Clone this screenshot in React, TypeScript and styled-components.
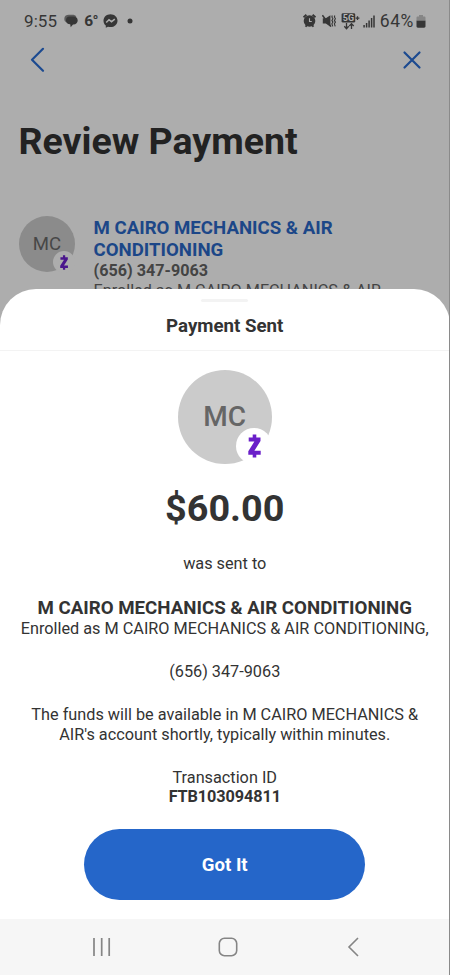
import React, { FC } from "react";
import styled, { createGlobalStyle } from "styled-components";

const GlobalStyle = createGlobalStyle`
  * {
    box-sizing: border-box;
  }
  body {
    margin: 0;
    font-family: Roboto, "Liberation Sans", sans-serif;
  }
`;

const Screen = styled.div`
  position: relative;
  display: flex;
  flex-direction: column;
  width: 450px;
  height: 975px;
  overflow: hidden;
  background-color: #adadad;
  border-right: 1px solid #8a8a8a;
`;

// Status bar
const StatusBar = styled.div`
  display: flex;
  justify-content: space-between;
  height: 42px;
  padding: 0 23px 0 24px;
  color: #363636;
`;

const StatusGroup = styled.div`
  display: flex;
  align-items: center;
  height: 42px;
`;

const StatusText = styled.span`
  font-size: 17px;
  letter-spacing: 0.1px;
`;

const BatteryText = styled.span`
  margin-left: 5px;
  font-size: 17.5px;
  letter-spacing: 0.6px;
`;

const Temperature = styled.span`
  margin: 0 5px 0 6px;
  font-size: 15.5px;
  font-weight: 700;
  letter-spacing: -0.6px;
`;

const StatusIcon = styled.svg<{ $left?: number }>`
  display: block;
  flex: none;
  margin-left: ${(p) => p.$left ?? 0}px;
`;

// Page under the sheet
const Toolbar = styled.div`
  display: flex;
  justify-content: space-between;
  align-items: center;
  height: 36px;
  padding: 0 27px 0 29px;
  color: #1c4a90;
`;

const IconButton = styled.button`
  display: flex;
  padding: 0;
  border: none;
  background: none;
  color: inherit;
`;

const PageTitle = styled.h1`
  margin: 38px 0 0 18.5px;
  font-size: 37.5px;
  line-height: 50px;
  font-weight: 700;
  color: #222;
`;

const Recipient = styled.div`
  display: flex;
  margin: 50px 0 0 19px;
`;

const RecipientInfo = styled.div`
  width: 310px;
  margin: 1px 0 0 18.5px;
  color: #444;
`;

const RecipientName = styled.div`
  font-size: 18.65px;
  line-height: 22px;
  font-weight: 700;
  color: #1c4788;
`;

const RecipientLine = styled.div<{ $bold?: boolean }>`
  font-size: 16.2px;
  line-height: 20px;
  font-weight: ${(p) => (p.$bold ? 700 : 400)};
  white-space: nowrap;
`;

// Avatar
const AvatarCircle = styled.div<{ $large?: boolean }>`
  position: relative;
  display: flex;
  flex: none;
  align-items: center;
  justify-content: center;
  width: ${(p) => (p.$large ? 94 : 56)}px;
  height: ${(p) => (p.$large ? 94 : 56)}px;
  border-radius: 50%;
  background-color: ${(p) => (p.$large ? "#cbcbcb" : "#8b8b8b")};
  color: ${(p) => (p.$large ? "#666" : "#474747")};
  font-size: ${(p) => (p.$large ? 28 : 18.6)}px;
  font-weight: ${(p) => (p.$large ? 500 : 400)};
`;

const AvatarBadge = styled.div<{ $large?: boolean }>`
  position: absolute;
  right: ${(p) => (p.$large ? -0.5 : 0)}px;
  bottom: ${(p) => (p.$large ? 0 : -1)}px;
  display: flex;
  align-items: center;
  justify-content: center;
  width: ${(p) => (p.$large ? 36 : 22)}px;
  height: ${(p) => (p.$large ? 36 : 22)}px;
  border-radius: 50%;
  background-color: ${(p) => (p.$large ? "#fff" : "#adadad")};
  color: ${(p) => (p.$large ? "#6a1fc9" : "#4a158c")};
`;

// Bottom sheet
const Sheet = styled.div`
  position: absolute;
  left: 0;
  right: -0.5px;
  top: 289px;
  bottom: 56px;
  display: flex;
  flex-direction: column;
  border-radius: 36px 36px 0 0;
  background-color: #fff;
  color: #333;
`;

const SheetHeader = styled.div`
  display: flex;
  flex-direction: column;
  align-items: center;
  height: 62px;
  border-bottom: 1px solid #f3f3f3;
`;

const Handle = styled.div`
  width: 47px;
  height: 3px;
  margin-top: 10px;
  border-radius: 2px;
  background-color: #f3f3f3;
`;

const SheetTitle = styled.h2`
  margin: 12px 0 0;
  font-size: 18.7px;
  line-height: 24px;
  font-weight: 700;
`;

const SheetBody = styled.div`
  display: flex;
  flex-direction: column;
  align-items: center;
  padding-top: 18.5px;
`;

const Amount = styled.div`
  margin-top: 24px;
  font-size: 37.8px;
  line-height: 40px;
  font-weight: 700;
`;

const BodyText = styled.p<{ $top?: number; $bold?: boolean }>`
  margin: ${(p) => p.$top ?? 0}px 0 0;
  font-size: 16.26px;
  line-height: 19.5px;
  font-weight: ${(p) => (p.$bold ? 700 : 400)};
  letter-spacing: ${(p) => (p.$bold ? "-0.1px" : "0")};
  text-align: center;
  white-space: nowrap;
`;

const PayeeName = styled.div`
  margin-top: 24px;
  font-size: 18.7px;
  line-height: 22px;
  font-weight: 700;
  white-space: nowrap;
`;

const GotItButton = styled.button`
  width: 281px;
  height: 71px;
  margin-top: 22.5px;
  padding: 0;
  border: none;
  border-radius: 36px;
  background-color: #2566c9;
  color: #fff;
  font-family: inherit;
  font-size: 18.6px;
  font-weight: 700;
`;

// System navigation
const NavBar = styled.div`
  display: flex;
  align-items: center;
  height: 56px;
  margin-top: auto;
  padding-left: 92px;
  background-color: #f6f6f6;
  color: #858585;
`;

const NavIcon = styled.svg<{ $left?: number }>`
  flex: none;
  margin-left: ${(p) => p.$left ?? 0}px;
`;

const ZelleMark: FC<{ size: number }> = ({ size }) => (
  <svg width={(size * 13) / 24} height={size} viewBox="0 0 13 24" fill="currentColor">
    <path d="M4.7.5h3.6v3h4.2v3.6L6.400 16.800h6.300v4H8.300v2.700H4.700v-2.700H.3v-3.600L6.400 7.500H.7v-4h4z" />
  </svg>
);

const Avatar: FC<{ large?: boolean }> = ({ large }) => (
  <AvatarCircle $large={large}>
    MC
    <AvatarBadge $large={large}>
      <ZelleMark size={large ? 24 : 15} />
    </AvatarBadge>
  </AvatarCircle>
);

const ChatIcon: FC = () => (
  <StatusIcon $left={7} width="14" height="14" viewBox="0 0 14 14">
    <path d="M3 8.6C1.2 8 .3 6.7.3 4.9.3 2.3 2 .8 5 .8h3.2c2 0 3.4.6 4.1 1.8" fill="#5b5b5b" />
    <path
      d="M5.7 2.6h3.5c2.8 0 4.5 1.5 4.5 3.9s-1.7 3.9-4.2 3.9H9l-2.3 2.9-.5-3C3.7 10.2 2 8.9 2 6.5s1.3-3.9 3.7-3.9z"
      fill="currentColor"
    />
  </StatusIcon>
);

const MessengerIcon: FC = () => (
  <StatusIcon width="15" height="14" viewBox="0 0 15 14">
    <path
      d="M7.5.2C3.5.2.5 3 .5 6.7c0 2 .9 3.700 2.300 4.900v2.200l2.200-1.100c.8.3 1.600.4 2.500.4 4 0 7-2.800 7-6.400S11.500.2 7.500.2z"
      fill="currentColor"
    />
    <path d="M3.200 8.500 6 5.700l2.500 2 3.300-2.500" fill="none" stroke="#adadad" strokeWidth="1.5" />
  </StatusIcon>
);

const AlarmIcon: FC = () => (
  <StatusIcon width="13" height="14" viewBox="0 0 13 14">
    <path d="M.5 3.400 3.400.8M12.500 3.400 9.600.8M2.600 12.800l1.500-2M10.400 12.800l-1.500-2" stroke="currentColor" strokeWidth="1.9" />
    <circle cx="6.5" cy="7" r="5.8" fill="currentColor" />
    <path d="M6.500 4.300v3.200h2.300" fill="none" stroke="#adadad" strokeWidth="1.1" />
  </StatusIcon>
);

const MuteIcon: FC = () => (
  <StatusIcon $left={6} width="14" height="14" viewBox="0 0 14 14">
    <path d="M.8 4.300h3L8.400 1.200v11.600L3.800 9.600h-3z" fill="currentColor" />
    <path d="M.4 1.300 9 12.600" stroke="currentColor" strokeWidth="1.5" />
    <path
      d="M10.300 1.500 9.900 3l1 1.700-1 1.700 1 1.700-1 1.700.8 2.500M12.800 1.500 12.400 3l1 1.700-1 1.700 1 1.700-1 1.700.8 2.500"
      fill="none"
      stroke="currentColor"
      strokeWidth="1.1"
    />
  </StatusIcon>
);

const NetworkIcon: FC = () => (
  <StatusIcon $left={5} width="19" height="17" viewBox="0 0 19 17">
    <rect x=".6" y=".2" width="13.6" height="9.4" rx="1.4" fill="currentColor" />
    <text x="7.400" y="8.100" fontSize="9" fontWeight="700" textAnchor="middle" fill="#b4b4b4">
      5G
    </text>
    <path d="M14.600 5.200h3.800M16.500 3.300v3.800" stroke="currentColor" strokeWidth="1.3" />
    <path d="M5.500 10v5.600M3.300 13.300l2.200 2.400 2.200-2.400M10.500 16v-5.500M8.300 13l2.200-2.400 2.200 2.400" fill="none" stroke="currentColor" strokeWidth="1.3" />
  </StatusIcon>
);

const SignalIcon: FC = () => (
  <StatusIcon $left={3} width="12" height="13" viewBox="0 0 12 13">
    <path d="M1.100 12.500V10M3.600 12.500V8M6.100 12.500V5.500M8.600 12.500V3M11 12.500V.5" stroke="currentColor" strokeWidth="1.5" />
  </StatusIcon>
);

const BatteryIcon: FC = () => (
  <StatusIcon $left={2} width="10" height="13" viewBox="0 0 10 13">
    <path d="M3 0h4v1.500h1.200c.8 0 1.300.5 1.300 1.300V6H.5V2.800c0-.8.5-1.300 1.300-1.300H3z" fill="#868686" />
    <path d="M.5 5.700h9v5.600c0 .9-.5 1.400-1.400 1.400H1.900c-.9 0-1.400-.5-1.400-1.400z" fill="currentColor" />
  </StatusIcon>
);

const App: FC = () => {
  return (
    <Screen>
      <GlobalStyle />
      <StatusBar>
        <StatusGroup>
          <StatusText>9:55</StatusText>
          <ChatIcon />
          <Temperature>6°</Temperature>
          <MessengerIcon />
          <StatusIcon $left={9} width="6" height="6" viewBox="0 0 6 6">
            <circle cx="3" cy="3" r="2.5" fill="currentColor" />
          </StatusIcon>
        </StatusGroup>
        <StatusGroup>
          <AlarmIcon />
          <MuteIcon />
          <NetworkIcon />
          <SignalIcon />
          <BatteryText>64%</BatteryText>
          <BatteryIcon />
        </StatusGroup>
      </StatusBar>

      <Toolbar>
        <IconButton aria-label="Back">
          <svg width="17" height="26" viewBox="0 0 17 26" fill="none" stroke="currentColor" strokeWidth="2.2" strokeLinecap="round" strokeLinejoin="round">
            <path d="M14 1.800 3 12.800l11 11" />
          </svg>
        </IconButton>
        <IconButton aria-label="Close">
          <svg width="20" height="20" viewBox="0 0 20 20" fill="none" stroke="currentColor" strokeWidth="2.2" strokeLinecap="round">
            <path d="m2.500 2.500 15 15M17.500 2.500l-15 15" />
          </svg>
        </IconButton>
      </Toolbar>

      <PageTitle>Review Payment</PageTitle>

      <Recipient>
        <Avatar />
        <RecipientInfo>
          <RecipientName>
            M CAIRO MECHANICS & AIR
            <br />
            CONDITIONING
          </RecipientName>
          <RecipientLine $bold>(656) 347-9063</RecipientLine>
          <RecipientLine>Enrolled as M CAIRO MECHANICS & AIR</RecipientLine>
        </RecipientInfo>
      </Recipient>

      <Sheet>
        <SheetHeader>
          <Handle />
          <SheetTitle>Payment Sent</SheetTitle>
        </SheetHeader>
        <SheetBody>
          <Avatar large />
          <Amount>$60.00</Amount>
          <BodyText $top={26}>was sent to</BodyText>
          <PayeeName>M CAIRO MECHANICS & AIR CONDITIONING</PayeeName>
          <BodyText>Enrolled as M CAIRO MECHANICS & AIR CONDITIONING,</BodyText>
          <BodyText $top={23.5}>(656) 347-9063</BodyText>
          <BodyText $top={23.5}>
            The funds will be available in M CAIRO MECHANICS &
            <br />
            AIR's account shortly, typically within minutes.
          </BodyText>
          <BodyText $top={23.5}>Transaction ID</BodyText>
          <BodyText $bold>FTB103094811</BodyText>
          <GotItButton>Got It</GotItButton>
        </SheetBody>
      </Sheet>

      <NavBar>
        <NavIcon width="19" height="20" viewBox="0 0 19 20" stroke="currentColor" strokeWidth="1.7">
          <path d="M2 1v18M9.700 1v18M17.200 1v18" />
        </NavIcon>
        <NavIcon $left={106.5} width="20" height="20" viewBox="0 0 20 20" fill="none" stroke="currentColor" strokeWidth="1.6">
          <rect x="1.3" y="1.3" width="17.4" height="17.4" rx="5.2" />
        </NavIcon>
        <NavIcon $left={109.5} width="13" height="20" viewBox="0 0 13 20" fill="none" stroke="currentColor" strokeWidth="1.6">
          <path d="m11 1-9 9 9 9" />
        </NavIcon>
      </NavBar>
    </Screen>
  );
};

export default App;
